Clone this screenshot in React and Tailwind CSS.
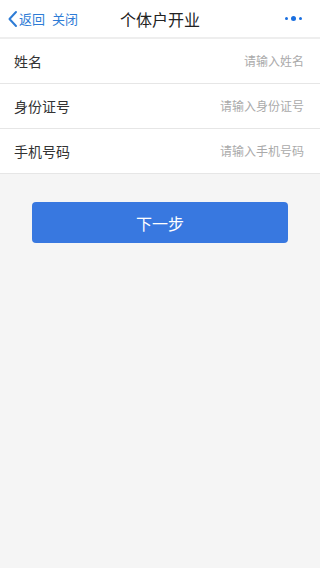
import React from 'react'

const font = { fontFamily: '"Noto Sans CJK SC", "Noto Sans", sans-serif' }

function Field({ label, placeholder }) {
    return (
        <div className="flex items-center justify-between h-[45px] pl-[14px] pr-[16px] border-b border-[#e6e6e6] bg-white">
            <span className="text-[14px] text-[#333]">{label}</span>
            <input
                className="w-[150px] text-right text-[12px] text-[#333] placeholder-[#aaaaaa] outline-none bg-transparent"
                placeholder={placeholder}
                style={font}
            />
        </div>
    )
}

export default function App() {
    return (
        <div className="min-h-[568px] w-[320px] bg-[#f5f5f5]" style={font}>
            {/* top bar */}
            <div className="relative flex items-center h-[39px] bg-white border-b-2 border-[#eeeeee]">
                <div className="flex items-center pl-[7px] text-[13px] text-[#2e7cd6]">
                    <svg width="11" height="18" viewBox="0 0 11 18" className="mr-[1px]">
                        <path d="M9 2 L2.5 9 L9 16" fill="none" stroke="#2e7cd6" strokeWidth="2" strokeLinecap="round" strokeLinejoin="round" />
                    </svg>
                    <span>返回</span>
                    <span className="ml-[7px]">关闭</span>
                </div>
                <div className="absolute left-0 right-0 text-center text-[16px] text-[#222] pointer-events-none">个体户开业</div>
                <div className="ml-auto flex items-center gap-[3px] pr-[18px]">
                    <span className="w-[3px] h-[3px] rounded-full bg-[#1a6fe0]" />
                    <span className="w-[5px] h-[5px] rounded-full bg-[#1a6fe0]" />
                    <span className="w-[3px] h-[3px] rounded-full bg-[#1a6fe0]" />
                </div>
            </div>

            <Field label="姓名" placeholder="请输入姓名" />
            <Field label="身份证号" placeholder="请输入身份证号" />
            <Field label="手机号码" placeholder="请输入手机号码" />

            <div className="px-[32px] pt-[28px]">
                <button className="w-full h-[41px] rounded-[4px] bg-[#3878e0] text-white text-[16px]">下一步</button>
            </div>
        </div>
    )
}
